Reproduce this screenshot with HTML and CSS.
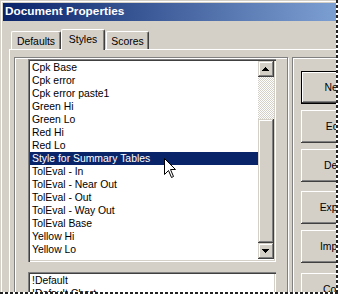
FILE: index.html
```html
<!DOCTYPE html>
<html lang="en">

<head>
    <meta charset="UTF-8">
    <title>Document Properties</title>
    <link rel="stylesheet" href="styles.css">
</head>

<body>
    <!-- janela recortada, com a borda rasgada à direita e embaixo -->
    <div class="sheet">
        <div class="window">
            <div class="titlebar">Document Properties</div>
            <div class="client">
                <div class="tabs">
                    <div class="tab tab-defaults">Defaults</div>
                    <div class="tab tab-styles active">Styles</div>
                    <div class="tab tab-scores">Scores</div>
                </div>
                <div class="panel">
                    <div class="group left-group">
                        <div class="listbox styles-list">
                            <ul class="items">
                                <li>Cpk Base</li>
                                <li>Cpk error</li>
                                <li>Cpk error paste1</li>
                                <li>Green Hi</li>
                                <li>Green Lo</li>
                                <li>Red Hi</li>
                                <li>Red Lo</li>
                                <li class="selected">Style for Summary Tables</li>
                                <li>TolEval - In</li>
                                <li>TolEval - Near Out</li>
                                <li>TolEval - Out</li>
                                <li>TolEval - Way Out</li>
                                <li>TolEval Base</li>
                                <li>Yellow Hi</li>
                                <li>Yellow Lo</li>
                            </ul>
                            <div class="scrollbar">
                                <div class="sb-btn">
                                    <svg width="7" height="4" viewBox="0 0 7 4"><path d="M3 0h1v1h1v1h1v1h1v1H0V3h1V2h1V1h1z" /></svg>
                                </div>
                                <div class="sb-track"></div>
                                <div class="sb-thumb"></div>
                                <div class="sb-btn">
                                    <svg width="7" height="4" viewBox="0 0 7 4"><path d="M0 0h7v1H6v1H5v1H4v1H3V3H2V2H1V1H0z" /></svg>
                                </div>
                            </div>
                        </div>
                        <div class="listbox charts-list">
                            <ul class="items">
                                <li>!Default</li>
                                <li>!Default Chart</li>
                            </ul>
                        </div>
                    </div>
                    <div class="group right-group">
                        <button class="btn default">New...</button>
                        <button class="btn">Edit...</button>
                        <button class="btn">Delete</button>
                        <button class="btn spaced">Export...</button>
                        <button class="btn">Import...</button>
                        <button class="btn spaced-more">Copy...</button>
                    </div>
                </div>
            </div>
            <!-- ponteiro do mouse por cima da lista -->
            <svg class="cursor" width="13" height="21" viewBox="0 0 13 21">
                <path d="M0.5 0.5V16.5L4.5 12.5L7.5 19.5L9.5 18.5L6.5 11.5H11.5Z" />
            </svg>
        </div>
    </div>
</body>

</html>
```

FILE: styles.css
```css
/* janela no estilo clássico do Windows 2000 */
body {
    margin: 0;
    background: #fff;
    font-family: "Liberation Sans", Arial, sans-serif;
    font-size: 10.4px;
    color: #000;
}

.sheet {
    width: 339px;
    height: 295px;
    background:
        repeating-linear-gradient(to bottom, #222 0 3px, transparent 3px 5px) 336px 0 / 2px 294px no-repeat,
        repeating-linear-gradient(to right, #222 0 3px, transparent 3px 5px) 0 292px / 338px 2px no-repeat;
}

.window {
    position: relative;
    width: 336px;
    height: 292px;
    box-sizing: border-box;
    overflow: hidden;
    padding: 3px 0 0 3px;
    background: #d4d0c8;
    box-shadow: inset 1px 1px #d4d0c8, inset 2px 2px #fff;
}

.titlebar {
    height: 18px;
    padding-left: 2px;
    line-height: 17px;
    font-size: 11.8px;
    font-weight: bold;
    color: #fff;
    white-space: nowrap;
    background: linear-gradient(to right, #0a246a, #7c9fd2);
}

.client {
    padding: 8px 0 0 6px;
}

/* abas */
.tabs {
    display: flex;
    align-items: flex-end;
    height: 20px;
    padding-left: 2px;
}

.tab {
    box-sizing: border-box;
    height: 18px;
    padding-top: 3px;
    line-height: 13px;
    text-align: center;
    background: #d4d0c8;
    border-top: 1px solid #fff;
    border-left: 1px solid #fff;
    border-right: 1px solid #404040;
    border-radius: 2px 2px 0 0;
    box-shadow: inset -1px 0 #808080;
}

.tab-defaults {
    width: 50px;
}

.tab-styles {
    width: 44px;
}

.tab-scores {
    width: 43px;
    margin-left: 1px;
}

.tab.active {
    position: relative;
    z-index: 1;
    height: 21px;
    margin-bottom: -1px;
}

.panel {
    display: flex;
    height: 260px;
    border-top: 1px solid #fff;
    border-left: 1px solid #fff;
}

/* caixas de grupo com borda entalhada */
.group {
    flex: none;
    box-sizing: border-box;
    height: 260px;
    margin-top: 7px;
    border: 1px solid #808080;
    box-shadow: 1px 1px #fff, inset 1px 1px #fff;
}

.left-group {
    width: 274px;
    margin-left: 4px;
    padding: 1px 0 0 13px;
}

.right-group {
    width: 100px;
    margin-left: 4px;
    padding: 13px 0 0 8px;
}

/* listas */
.listbox {
    display: flex;
    width: 248px;
    box-sizing: border-box;
    padding: 2px;
    background: #fff;
    box-shadow: inset 1px 1px #808080, inset 2px 2px #404040, inset -1px -1px #fff, inset -2px -2px #d4d0c8;
}

.styles-list {
    height: 203px;
}

.charts-list {
    height: 40px;
    margin-top: 10px;
}

.items {
    flex: 1;
    margin: 0;
    padding: 0;
    list-style: none;
}

.items li {
    height: 13px;
    padding-left: 2px;
    line-height: 13px;
    white-space: nowrap;
}

.items li.selected {
    background: #0a246a;
    color: #fff;
}

/* barra de rolagem */
.scrollbar {
    display: flex;
    flex-direction: column;
    width: 16px;
}

.sb-btn,
.sb-thumb {
    box-sizing: border-box;
    background: #d4d0c8;
    box-shadow: inset -1px -1px #404040, inset 1px 1px #d4d0c8, inset -2px -2px #808080, inset 2px 2px #fff;
}

.sb-btn {
    display: flex;
    align-items: center;
    justify-content: center;
    height: 16px;
    padding-right: 1px;
}

.sb-btn svg {
    shape-rendering: crispEdges;
    fill: #000;
}

.sb-track {
    height: 42px;
    background: repeating-conic-gradient(#d4d0c8 0 25%, #fff 0 50%) 0 0 / 2px 2px;
}

.sb-thumb {
    height: 124px;
}

/* botões */
.btn {
    display: block;
    box-sizing: border-box;
    width: 76px;
    height: 33px;
    margin: 0 0 6px;
    padding: 0;
    font: inherit;
    color: #000;
    background: #d4d0c8;
    border: none;
    box-shadow: inset -1px -1px #404040, inset 1px 1px #fff, inset -2px -2px #808080, inset 2px 2px #d4d0c8;
}

.btn.default {
    border: 1px solid #000;
}

.btn.spaced {
    margin-top: 9px;
}

.btn.spaced-more {
    margin-top: 10px;
}

.cursor {
    position: absolute;
    left: 164px;
    top: 158px;
    fill: #fff;
    stroke: #000;
    stroke-width: 1;
}
```
